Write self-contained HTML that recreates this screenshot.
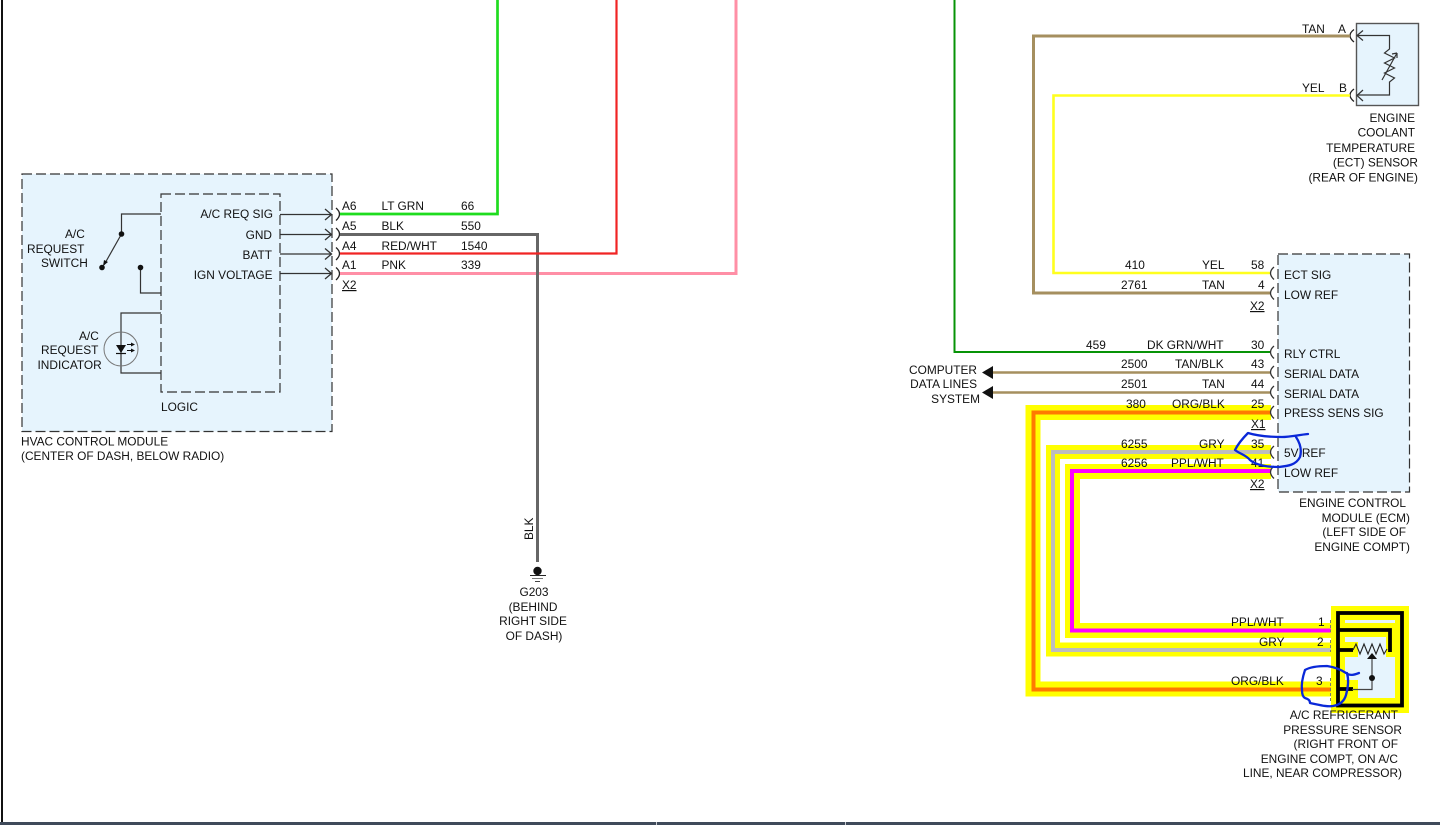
<!DOCTYPE html>
<html><head><meta charset="utf-8"><title>Wiring diagram</title>
<style>
html,body{margin:0;padding:0;background:#fff;width:1440px;height:825px;overflow:hidden}
svg{display:block}
text{font-family:"Liberation Sans",sans-serif;font-size:11.880px;fill:#111}
.e{text-anchor:end}.m{text-anchor:middle}
.u{text-decoration:underline}
</style></head><body>
<svg width="1440" height="825" viewBox="0 0 1440 825" xmlns="http://www.w3.org/2000/svg">
<rect width="1440" height="825" fill="#fff"/>
<rect x="1" y="0" width="2" height="822" fill="#111"/>
<rect x="0" y="822" width="1440" height="3" fill="#3f4a5a"/>
<rect x="656" y="822" width="1" height="3" fill="#c8ccd2"/>
<rect x="845" y="822" width="1" height="3" fill="#c8ccd2"/>

<!-- HVAC module -->
<rect x="22" y="174" width="310" height="257.500" fill="#e6f4fd" stroke="#333" stroke-width="1.200" stroke-dasharray="10 4"/>
<rect x="161" y="194" width="119" height="198" fill="#e6f4fd" stroke="#333" stroke-width="1.200" stroke-dasharray="10 4"/>
<g fill="none" stroke="#333" stroke-width="1.200">
<path d="M161 214H121.500V234"/>
<path d="M121.500 234L104 265"/>
<path d="M140.500 267V293H161"/>
<path d="M161 313H121V373H161"/>
<circle cx="121" cy="349" r="17" stroke="#777" stroke-width="1"/>
<g stroke-width="1.300">
<path d="M280 214.500H331M325 209l6.500 5.500-6.500 5.500"/>
<path d="M280 234.500H331M325 229l6.500 5.500-6.500 5.500"/>
<path d="M280 254H331M325 248.500l6.500 5.500-6.500 5.500"/>
<path d="M280 273.500H331M325 268l6.500 5.500-6.500 5.500"/>
</g>
<path d="M336 208q7 6 0 12.500M336 228q7 6 0 12.500M336 247.500q7 6 0 12.500M336 267.500q7 6 0 12.500" stroke="#222" stroke-width="1.300"/>
</g>
<circle cx="121.500" cy="234" r="2.800" fill="#111"/>
<circle cx="102" cy="267.500" r="2.800" fill="#111"/>
<circle cx="140.500" cy="267.500" r="2.800" fill="#111"/>
<path d="M103 266l1-6 4 2z" fill="#111"/>
<path d="M116 345h10l-5 8z" fill="#111"/>
<path d="M116 353.500h10" stroke="#111" stroke-width="1.200"/>
<path d="M127 344.500h7M127 350.500h7" stroke="#111" stroke-width="1"/>
<path d="M135 344.500l-4-2v4zM135 350.500l-4-2v4z" fill="#111"/>

<!-- left wires -->
<g fill="none" stroke-width="3">
<path d="M736 0V273.500H340" stroke="#ff8fa6" />
<path d="M340 234.500H537.500V562" stroke="#666"/>
<path d="M616.500 0V253.500H340" stroke="#f02424" stroke-width="2.200"/>
<path d="M497.500 0V214H340" stroke="#1fdc1f" stroke-width="2.700"/>
</g>
<circle cx="537.500" cy="571" r="4.200" fill="#111"/>
<path d="M530 575.500h16" stroke="#222" stroke-width="1"/>
<path d="M532 578.500h11" stroke="#777" stroke-width="1"/>
<path d="M535 581.500h5" stroke="#444" stroke-width="1"/>

<!-- left text -->
<text x="65" y="238">A/C</text><text x="27" y="253">REQUEST</text><text x="41" y="267">SWITCH</text>
<text x="79" y="340">A/C</text><text x="41" y="354">REQUEST</text><text x="37.500" y="369">INDICATOR</text>
<text x="273" y="218" class="e">A/C REQ SIG</text><text x="272" y="239" class="e">GND</text><text x="272" y="259" class="e">BATT</text><text x="272.500" y="279" class="e">IGN VOLTAGE</text>
<text x="161" y="411">LOGIC</text>
<text x="21" y="445.500">HVAC CONTROL MODULE</text><text x="21" y="460">(CENTER OF DASH, BELOW RADIO)</text>
<text x="342" y="210">A6</text><text x="342" y="230">A5</text><text x="342" y="250">A4</text><text x="342" y="269">A1</text><text x="342" y="289" class="u">X2</text>
<text x="381.500" y="210">LT GRN</text><text x="381.500" y="230">BLK</text><text x="381.500" y="250">RED/WHT</text><text x="381.500" y="269">PNK</text>
<text x="461" y="210">66</text><text x="461" y="230">550</text><text x="461" y="250">1540</text><text x="461" y="269">339</text>
<text transform="translate(533 540) rotate(-90)">BLK</text>
<text x="534" y="596" class="m">G203</text><text x="533" y="611" class="m">(BEHIND</text><text x="533" y="625" class="m">RIGHT SIDE</text><text x="534" y="640" class="m">OF DASH)</text>

<!-- ECT sensor -->
<rect x="1356.500" y="23.500" width="62" height="82" fill="#e6f4fd" stroke="#555" stroke-width="1.400"/>
<g fill="none" stroke="#333" stroke-width="1.200">
<path d="M1357 35.500H1389.500V49l-5 4 10 5-10 5 10 5-10 5 10 5-5 4V95H1357"/>
<path d="M1382 80l15-27M1397 53l-5 1M1397 53l0 5"/>
<path d="M1363 30.500l-6 5 6 5M1363 90l-6 5.500 6 5.500"/>
<path d="M1354 29.500q-8 6 0 12.500M1354 89q-8 6 0 12.500" stroke="#222" stroke-width="1.300"/>
</g>

<!-- ECM -->
<rect x="1278" y="254" width="131.500" height="238" fill="#e6f4fd" stroke="#333" stroke-width="1.200" stroke-dasharray="10 4"/>

<!-- right wires -->
<g fill="none">
<path d="M954.500 0V352H1271" stroke="#079307" stroke-width="2"/>
<path d="M1350 36H1033.500V293H1271" stroke="#a58f5f" stroke-width="3"/>
<path d="M1350 95.500H1053.500V273H1271" stroke="#ffff1e" stroke-width="2.600"/>
<path d="M990 372.500H1271M990 392.500H1271" stroke="#a58f5f" stroke-width="2.500"/>
</g>
<path d="M982 372.500l11-6.500v13zM982 392.500l11-6.500v13z" fill="#111"/>

<!-- highlighted wires -->
<g fill="none" stroke-linejoin="miter">
<path d="M1271 412.500H1033V689H1331" stroke="#ffff00" stroke-width="15"/>
<path d="M1271 452H1053V649.500H1331" stroke="#ffff00" stroke-width="14"/>
<path d="M1271 471.500H1072.500V630.500H1331" stroke="#ffff00" stroke-width="15"/>
<path d="M1271 412.500H1033.500V689.500H1331" stroke="#ff7a00" stroke-width="4"/>
<path d="M1271 452H1053V650H1331" stroke="#bdbdbd" stroke-width="4"/>
<path d="M1271 471H1072V630.500H1331" stroke="#ff00ff" stroke-width="4"/>
</g>

<!-- connector arcs ECM -->
<g fill="none" stroke="#333" stroke-width="1.300">
<path d="M1274 267q-7 6 0 12.500M1274 287q-7 6 0 12.500M1274 346q-7 6 0 12.500M1274 366q-7 6 0 12.500M1274 386q-7 6 0 12.500M1274 406q-7 6 0 12.500M1274 446q-7 6 0 12.500M1274 466q-7 6 0 12.500"/>
</g>

<!-- AC sensor -->
<rect x="1331" y="606" width="78" height="107" fill="#ffff00"/>
<rect x="1345" y="620" width="50" height="3" fill="#e6f4fd"/>
<rect x="1345" y="637" width="41" height="22" fill="#e6f4fd"/>
<rect x="1345" y="657" width="50" height="41" fill="#e6f4fd"/>
<rect x="1345" y="642" width="13" height="15" fill="#ffff00"/>
<rect x="1345" y="680" width="13" height="18" fill="#ffff00"/>
<g fill="none" stroke="#000" stroke-width="3.800">
<rect x="1338" y="613" width="64" height="92.500"/>
<path d="M1337 630H1390V652"/>
<path d="M1337 650H1353"/>
<path d="M1337 689H1353"/>
</g>
<path d="M1353 650l3-6 4 10 4-10 4 10 4-10 4 10 4-10 4 10 3-5" fill="none" stroke="#222" stroke-width="1.100"/>
<path d="M1352 689.500H1372V658" fill="none" stroke="#444" stroke-width="1.200"/>
<path d="M1372 653l-5 6h10z" fill="#111"/>
<circle cx="1372" cy="678" r="3" fill="#111"/>
<path d="M1330.500 620v12M1330.500 640v12M1330.500 678v24" stroke="#777" stroke-width="1" stroke-dasharray="3 2"/>

<!-- right text -->
<text x="1302" y="33">TAN</text><text x="1338" y="33">A</text><text x="1302" y="92">YEL</text><text x="1339" y="92">B</text>
<text x="1415" y="122" class="e">ENGINE</text><text x="1415" y="136.500" class="e">COOLANT</text><text x="1415" y="152" class="e">TEMPERATURE</text><text x="1418" y="166.500" class="e">(ECT) SENSOR</text><text x="1418" y="181.500" class="e">(REAR OF ENGINE)</text>

<text x="1125" y="269">410</text><text x="1202" y="269">YEL</text><text x="1251" y="269">58</text>
<text x="1121" y="289">2761</text><text x="1202" y="289">TAN</text><text x="1258" y="289">4</text>
<text x="1250" y="310" class="u">X2</text>
<text x="1086" y="349">459</text><text x="1147" y="349">DK GRN/WHT</text><text x="1251" y="349">30</text>
<text x="1121" y="368">2500</text><text x="1175" y="368">TAN/BLK</text><text x="1251" y="368">43</text>
<text x="1121" y="388">2501</text><text x="1202" y="388">TAN</text><text x="1251" y="388">44</text>
<text x="1126" y="408">380</text><text x="1172" y="408">ORG/BLK</text><text x="1251" y="408">25</text>
<text x="1251" y="428" class="u">X1</text>
<text x="1121" y="448">6255</text><text x="1199" y="448">GRY</text><text x="1251" y="448">35</text>
<text x="1121" y="467">6256</text><text x="1171" y="467">PPL/WHT</text><text x="1251" y="467">41</text>
<text x="1250" y="488" class="u">X2</text>

<text x="1284" y="279">ECT SIG</text><text x="1284" y="299">LOW REF</text><text x="1284" y="358">RLY CTRL</text><text x="1284" y="378">SERIAL DATA</text><text x="1284" y="398">SERIAL DATA</text><text x="1284" y="417">PRESS SENS SIG</text><text x="1284" y="457">5V REF</text><text x="1284" y="477">LOW REF</text>

<text x="977" y="374" class="e">COMPUTER</text><text x="977" y="388" class="e">DATA LINES</text><text x="980" y="403" class="e">SYSTEM</text>
<text x="1406" y="507" class="e">ENGINE CONTROL</text><text x="1410" y="522" class="e">MODULE (ECM)</text><text x="1406" y="536" class="e">(LEFT SIDE OF</text><text x="1410" y="551" class="e">ENGINE COMPT)</text>

<text x="1231" y="626">PPL/WHT</text><text x="1318" y="626">1</text>
<text x="1259" y="646">GRY</text><text x="1317" y="646">2</text>
<text x="1231" y="685">ORG/BLK</text><text x="1316" y="685">3</text>
<text x="1398" y="719" class="e">A/C REFRIGERANT</text><text x="1402" y="734" class="e">PRESSURE SENSOR</text><text x="1398" y="748" class="e">(RIGHT FRONT OF</text><text x="1398" y="763" class="e">ENGINE COMPT, ON A/C</text><text x="1402" y="777" class="e">LINE, NEAR COMPRESSOR)</text>

<!-- pen scribbles -->
<g fill="none" stroke="#0a28d8" stroke-width="2.300" stroke-linecap="round" stroke-linejoin="round">
<path d="M1308 434C1298 435 1290 437 1282 437C1270 437 1258 436 1248 433C1243 438 1238 444 1235 450C1240 454 1246 455 1250 460C1256 465 1266 467 1279 467C1288 466 1296 465 1300 457C1302 450 1300 443 1296 437"/>
<path d="M1359 673C1354 675 1350 676 1346 673C1340 669 1334 667 1327 666C1318 666 1310 667 1305 670C1303 676 1301 683 1302 690C1302 695 1303 697 1305 698C1308 699 1310 700 1310 703C1320 705 1327 707 1333 706C1339 705 1344 702 1346 695C1348 688 1349 680 1347 673"/>
</g>
</svg>
</body></html>
